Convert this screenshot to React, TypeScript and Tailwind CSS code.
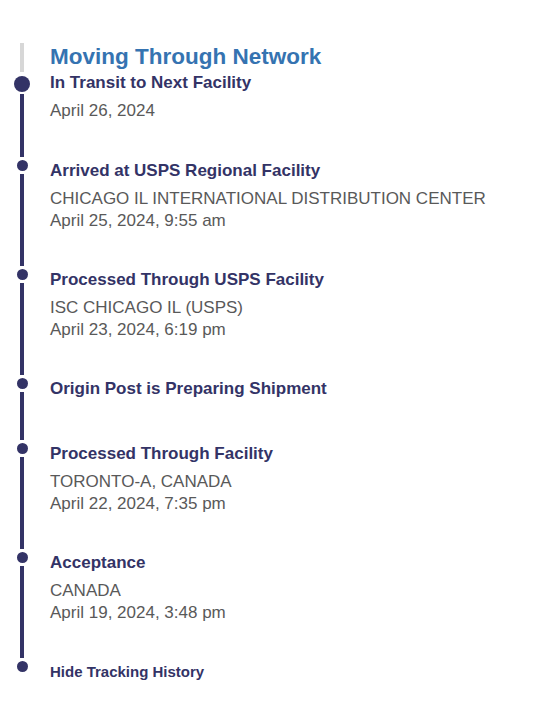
const events = [
  {
    title: "Arrived at USPS Regional Facility",
    lines: ["CHICAGO IL INTERNATIONAL DISTRIBUTION CENTER", "April 25, 2024, 9:55 am"],
  },
  {
    title: "Processed Through USPS Facility",
    lines: ["ISC CHICAGO IL (USPS)", "April 23, 2024, 6:19 pm"],
  },
  { title: "Origin Post is Preparing Shipment", lines: [] },
  {
    title: "Processed Through Facility",
    lines: ["TORONTO-A, CANADA", "April 22, 2024, 7:35 pm"],
  },
  {
    title: "Acceptance",
    lines: ["CANADA", "April 19, 2024, 3:48 pm"],
  },
];

export default function App() {
  return (
    <div className="min-h-screen bg-white pt-[43px] font-['Liberation_Sans',Arial,sans-serif]">
      {/* heading */}
      <div className="flex">
        <div className="flex w-[44px] flex-col items-center">
          <div className="h-[29px] w-[4px] bg-[#d7d7d7]" />
        </div>
        <h2 className="ml-[6px] h-[28px] text-[22.5px] leading-[28px] font-bold text-[#3573b1]">
          Moving Through Network
        </h2>
      </div>

      {/* current status */}
      <div className="flex">
        <div className="flex w-[44px] flex-col items-center">
          <div className="mt-[4px] h-[16px] w-[16px] rounded-full bg-[#333366]" />
          <div className="mt-[2px] mb-[3px] w-[4px] flex-1 bg-[#333366]" />
        </div>
        <div className="ml-[6px] pb-[38px]">
          <div className="text-[17px] leading-[22px] font-bold text-[#333366]">In Transit to Next Facility</div>
          <div className="mt-[6px] text-[17px] leading-[22px] text-[#595959]">April 26, 2024</div>
        </div>
      </div>

      {events.map((e) => (
        <div key={e.title} className="flex">
          <div className="flex w-[44px] flex-col items-center">
            <div className="h-[11px] w-[11px] rounded-full bg-[#333366]" />
            <div className="mt-[3px] mb-[3px] w-[4px] flex-1 bg-[#333366]" />
          </div>
          <div className="ml-[6px] pb-[37px]">
            <div className="text-[17px] leading-[22px] font-bold text-[#333366]">{e.title}</div>
            <div className="mt-[6px] text-[17px] leading-[22px] text-[#595959]">
              {e.lines.map((l) => (
                <div key={l}>{l}</div>
              ))}
            </div>
          </div>
        </div>
      ))}

      <div className="flex">
        <div className="flex w-[44px] flex-col items-center">
          <div className="h-[11px] w-[11px] rounded-full bg-[#333366]" />
        </div>
        <button className="ml-[6px] text-[15px] leading-[22px] font-bold text-[#333366]">
          Hide Tracking History
        </button>
      </div>
    </div>
  );
}
